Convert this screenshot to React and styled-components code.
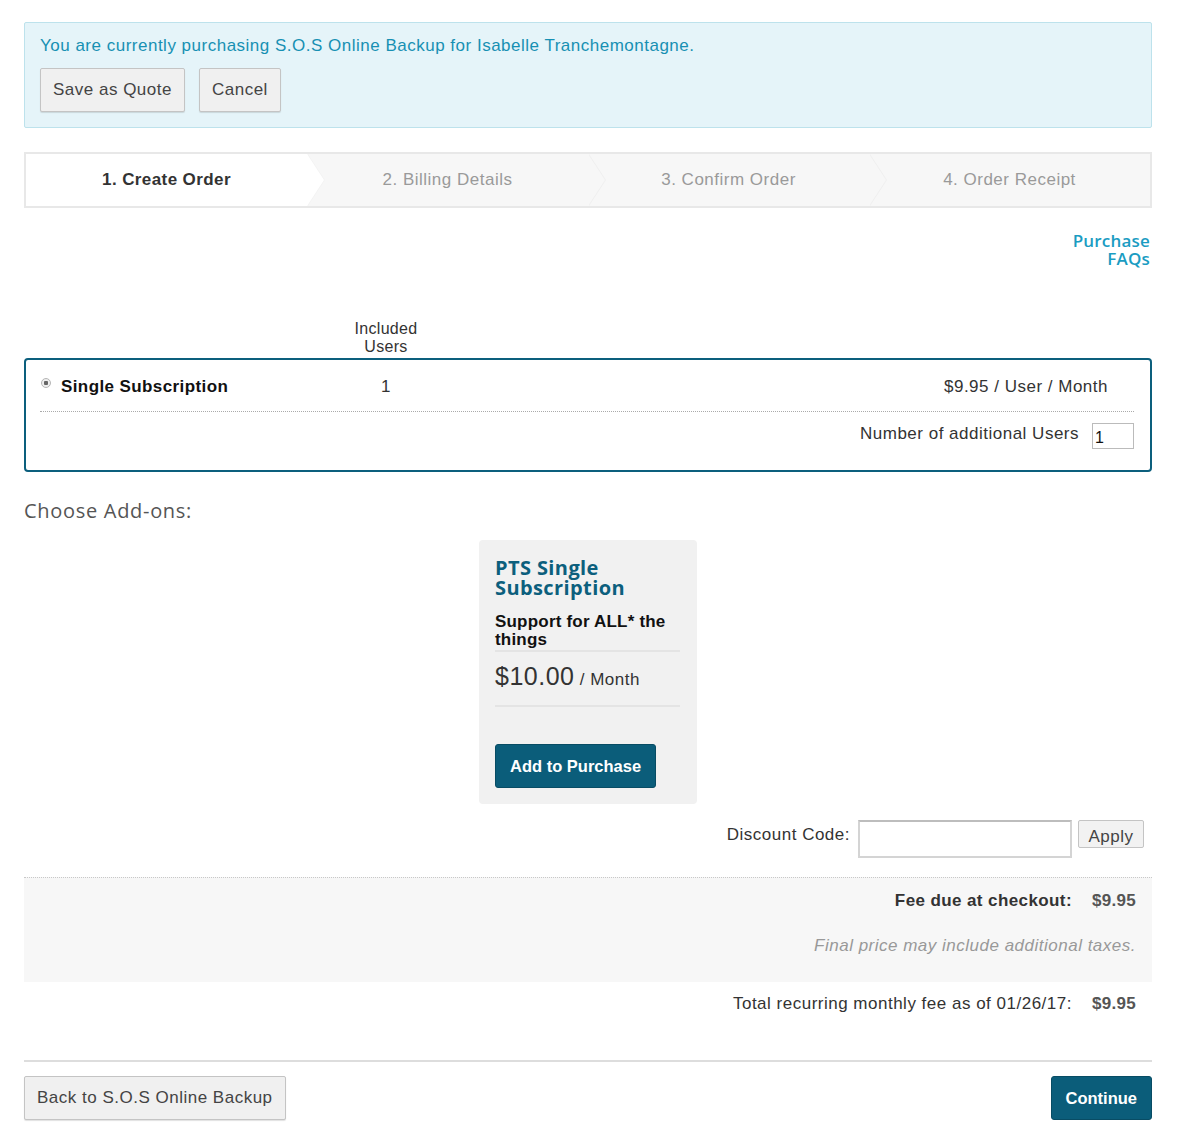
import styled, { createGlobalStyle } from "styled-components";

const GlobalStyle = createGlobalStyle`
  body {
    margin: 0;
    background: #ffffff;
    font-family: "Liberation Sans", Arial, sans-serif;
    letter-spacing: 0.5px;
    color: #333;
  }
  button, input {
    letter-spacing: 0.5px;
  }
`;

const Page = styled.main`
  width: 1128px;
  margin: 22px 0 24px 24px;
`;

const Alert = styled.section`
  background: #e5f4f9;
  border: 1px solid #bde2ec;
  border-radius: 2px;
  padding: 13px 15px 15px;
`;

const AlertText = styled.p`
  margin: 0 0 12px;
  color: #1790b3;
  font-size: 17px;
  line-height: 20px;
`;

const ButtonRow = styled.div`
  display: flex;
  gap: 14px;
`;

const GreyButton = styled.button`
  height: 44px;
  padding: 0 12px;
  background: #f0f0f0;
  border: 1px solid #c4c4c4;
  border-radius: 2px;
  box-shadow: 0 1px 1px rgba(0, 0, 0, 0.12);
  font-family: "Liberation Sans", Arial, sans-serif;
  font-size: 17px;
  color: #444;
`;

const PrimaryButton = styled.button`
  height: 44px;
  padding: 0 14px;
  background: #0b5d7a;
  border: 1px solid #084c64;
  border-radius: 3px;
  font-family: "Liberation Sans", Arial, sans-serif;
  font-size: 16.5px;
  font-weight: bold;
  letter-spacing: 0;
  color: #fff;
`;

const Steps = styled.nav`
  margin-top: 24px;
  display: grid;
  grid-template-columns: repeat(4, 1fr);
  height: 56px;
  box-sizing: border-box;
  border: 2px solid #e8e8e8;
  background: #f7f7f7;
`;

const Step = styled.div`
  position: relative;
  display: flex;
  align-items: center;
  justify-content: center;
  font-size: 17px;
  font-weight: ${(p) => (p.$active ? "bold" : "normal")};
  letter-spacing: ${(p) => (p.$active ? "0.4px" : "0.5px")};
  color: ${(p) => (p.$active ? "#333" : "#9a9a9a")};
  background: ${(p) => (p.$active ? "#fff" : "transparent")};

  &::before,
  &::after {
    content: "";
    position: absolute;
    top: 0;
    width: 17px;
    height: 100%;
    clip-path: polygon(0 0, 100% 50%, 0 100%);
    z-index: 1;
    display: ${(p) => (p.$last ? "none" : "block")};
  }
  &::before {
    right: -18px;
    background: ${(p) => (p.$active ? "#f3f3f3" : "#efefef")};
  }
  &::after {
    right: -17px;
    background: ${(p) => (p.$active ? "#fff" : "#f7f7f7")};
  }
`;

const FaqLink = styled.a`
  display: block;
  width: 90px;
  margin: 24px 2px 0 auto;
  text-align: right;
  font-family: "Open Sans", "Noto Sans", sans-serif;
  font-weight: 600;
  font-size: 17px;
  line-height: 18px;
  letter-spacing: 0.2px;
  color: #1a9cc2;
  text-decoration: none;
`;

const PlanGrid = styled.div`
  display: grid;
  grid-template-columns: 306px 80px 1fr;
  align-items: center;
`;

const PlanHeader = styled(PlanGrid)`
  margin-top: 52px;
  padding: 0 16px;
  font-size: 16px;
  line-height: 18px;
  letter-spacing: 0.3px;
  color: #333;
`;

const CenterCell = styled.div`
  text-align: center;
`;

const PlanBox = styled.section`
  margin-top: 2px;
  border: 2px solid #0c5f7d;
  border-radius: 4px;
  padding: 17px 16px 21px 14px;
`;

const PlanRow = styled(PlanGrid)`
  padding: 0 0 14px;
  border-bottom: 1px dotted #aaa;
  font-size: 17px;
`;

const PlanName = styled.label`
  display: flex;
  align-items: center;
  gap: 10px;
  font-weight: bold;
  letter-spacing: 0.4px;
  color: #111;
`;

const Radio = styled.span`
  width: 10px;
  height: 10px;
  margin: -8px 0 0 1px;
  border-radius: 50%;
  border: 1px solid #b5b5b5;
  background: radial-gradient(circle, #666 0 2px, #eee 2.5px);
  box-sizing: border-box;
`;

const Price = styled.div`
  text-align: right;
  padding-right: 26px;
  color: #333;
`;

const ExtraRow = styled.div`
  display: flex;
  justify-content: flex-end;
  align-items: center;
  gap: 13px;
  padding-top: 7px;
  font-size: 17px;
  color: #333;
`;

const SmallInput = styled.input`
  width: 42px;
  height: 26px;
  box-sizing: border-box;
  margin-top: 4px;
  border: 1px solid #bbb;
  padding: 4px 2px 0;
  font-family: "Liberation Sans", Arial, sans-serif;
  font-size: 16px;
  color: #111;
`;

const SectionTitle = styled.h2`
  margin: 27px 0 17px;
  font-family: "Open Sans", "Noto Sans", sans-serif;
  font-weight: normal;
  font-size: 20px;
  line-height: 24px;
  letter-spacing: 0.7px;
  color: #555;
`;

const AddonCard = styled.article`
  width: 218px;
  box-sizing: border-box;
  margin: 0 auto;
  padding: 18px 17px 16px 16px;
  background: #f1f1f1;
  border-radius: 4px;
`;

const AddonTitle = styled.h3`
  margin: 0 0 15px;
  font-family: "Open Sans", "Noto Sans", sans-serif;
  font-weight: bold;
  font-size: 20px;
  line-height: 20px;
  letter-spacing: 0.4px;
  color: #0c5f7d;
`;

const AddonDesc = styled.p`
  margin: 0;
  padding-bottom: 1px;
  border-bottom: 2px solid #e4e4e4;
  font-size: 17px;
  font-weight: bold;
  line-height: 18px;
  letter-spacing: 0.2px;
  color: #111;
`;

const AddonPrice = styled.div`
  padding: 10px 0 14px;
  border-bottom: 2px solid #e4e4e4;
  color: #333;
  font-size: 17px;
`;

const BigPrice = styled.span`
  font-size: 25px;
`;

const AddonAction = styled.div`
  padding-top: 37px;
`;

const DiscountRow = styled.div`
  display: flex;
  justify-content: flex-end;
  align-items: flex-start;
  gap: 6px;
  margin-top: 16px;
  padding-right: 8px;
  font-size: 17px;
`;

const DiscountLabel = styled.span`
  line-height: 30px;
  margin-right: 2px;
`;

const CodeInput = styled.input`
  width: 214px;
  height: 38px;
  box-sizing: border-box;
  border: 2px solid #d4d4d4;
  border-top-color: #bdbdbd;
  padding: 0 6px;
`;

const ApplyButton = styled.button`
  height: 28px;
  width: 66px;
  padding: 6px 0 0;
  background: #f2f2f2;
  border: 1px solid #c4c4c4;
  border-radius: 2px;
  font-family: "Liberation Sans", Arial, sans-serif;
  font-size: 17px;
  line-height: 20px;
  color: #444;
`;

const FeeBox = styled.section`
  margin-top: 19px;
  padding: 13px 16px 26px;
  background: #f7f7f7;
  border-top: 1px dotted #c8c8c8;
`;

const Totals = styled.div`
  display: grid;
  grid-template-columns: auto auto;
  justify-content: end;
  column-gap: 20px;
  font-size: 17px;
  line-height: 20px;
  color: #333;
  font-weight: ${(p) => (p.$strong ? "bold" : "normal")};
  letter-spacing: ${(p) => (p.$strong ? "0.4px" : "0.5px")};
  padding: ${(p) => (p.$strong ? "0" : "12px 16px 0")};
`;

const Amount = styled.span`
  font-weight: bold;
  letter-spacing: 0.3px;
  color: #555;
`;

const TaxNote = styled.p`
  margin: 25px 0 0;
  text-align: right;
  font-style: italic;
  font-size: 17px;
  line-height: 20px;
  color: #999;
`;

const Footer = styled.footer`
  margin-top: 46px;
  padding-top: 14px;
  border-top: 2px solid #ddd;
  display: flex;
  justify-content: space-between;
`;

export default function App() {
  return (
    <>
      <GlobalStyle />
      <Page>
        <Alert>
          <AlertText>
            You are currently purchasing S.O.S Online Backup for Isabelle
            Tranchemontagne.
          </AlertText>
          <ButtonRow>
            <GreyButton>Save as Quote</GreyButton>
            <GreyButton>Cancel</GreyButton>
          </ButtonRow>
        </Alert>

        <Steps>
          <Step $active>1. Create Order</Step>
          <Step>2. Billing Details</Step>
          <Step>3. Confirm Order</Step>
          <Step $last>4. Order Receipt</Step>
        </Steps>

        <FaqLink href="#">Purchase FAQs</FaqLink>

        <PlanHeader>
          <div />
          <CenterCell>
            Included
            <br />
            Users
          </CenterCell>
          <div />
        </PlanHeader>

        <PlanBox>
          <PlanRow>
            <PlanName>
              <Radio />
              Single Subscription
            </PlanName>
            <CenterCell>1</CenterCell>
            <Price>$9.95 / User / Month</Price>
          </PlanRow>
          <ExtraRow>
            <span>Number of additional Users</span>
            <SmallInput defaultValue="1" />
          </ExtraRow>
        </PlanBox>

        <SectionTitle>Choose Add-ons:</SectionTitle>

        <AddonCard>
          <AddonTitle>PTS Single Subscription</AddonTitle>
          <AddonDesc>Support for ALL* the things</AddonDesc>
          <AddonPrice>
            <BigPrice>$10.00</BigPrice> / Month
          </AddonPrice>
          <AddonAction>
            <PrimaryButton>Add to Purchase</PrimaryButton>
          </AddonAction>
        </AddonCard>

        <DiscountRow>
          <DiscountLabel>Discount Code:</DiscountLabel>
          <CodeInput />
          <ApplyButton>Apply</ApplyButton>
        </DiscountRow>

        <FeeBox>
          <Totals $strong>
            <span>Fee due at checkout:</span>
            <Amount>$9.95</Amount>
          </Totals>
          <TaxNote>Final price may include additional taxes.</TaxNote>
        </FeeBox>

        <Totals>
          <span>Total recurring monthly fee as of 01/26/17:</span>
          <Amount>$9.95</Amount>
        </Totals>

        <Footer>
          <GreyButton>Back to S.O.S Online Backup</GreyButton>
          <PrimaryButton>Continue</PrimaryButton>
        </Footer>
      </Page>
    </>
  );
}
